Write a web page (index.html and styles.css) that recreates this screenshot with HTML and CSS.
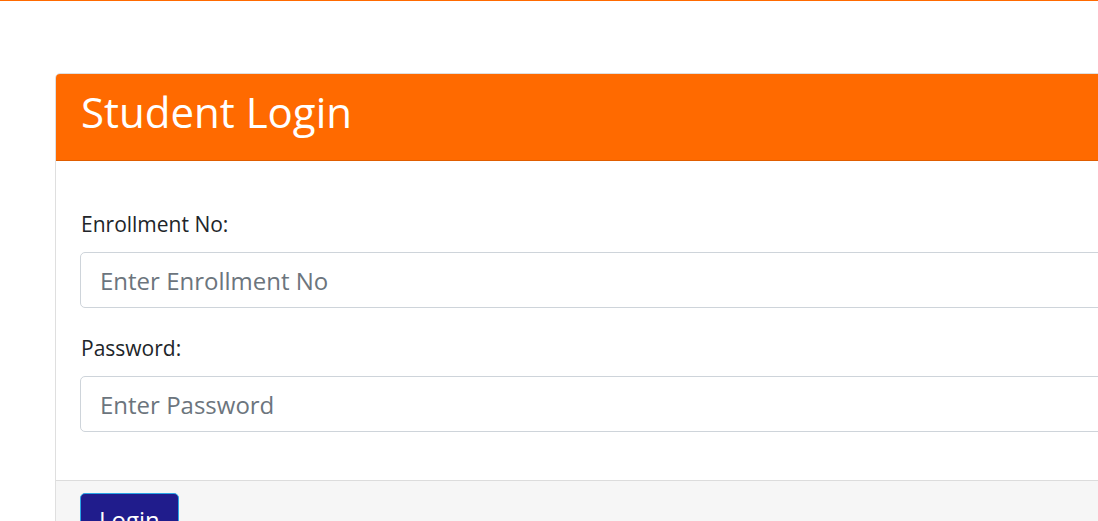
FILE: index.html
```html
<!DOCTYPE html>
<html lang="en">
<head>
<meta charset="utf-8">
<title>Student Login</title>
<link rel="stylesheet" href="styles.css">
</head>
<body>
<div class="page">
  <div class="card">
    <div class="card-header">
      <h2 class="card-title">Student Login</h2>
    </div>
    <div class="card-body">
      <form class="login-form">
        <div class="form-group">
          <label class="form-label" for="enroll">Enrollment No:</label>
          <input class="form-control" id="enroll" type="text" placeholder="Enter Enrollment No">
        </div>
        <div class="form-group">
          <label class="form-label" for="pwd">Password:</label>
          <input class="form-control" id="pwd" type="password" placeholder="Enter Password">
        </div>
      </form>
    </div>
    <div class="card-footer">
      <button class="btn-login" type="button">Login</button>
    </div>
  </div>
</div>
</body>
</html>
```

FILE: styles.css
```css
html, body {
  overflow: hidden;
}
body {
  margin: 0;
  border-top: 1px solid #ff6a00;
  font-family: "Open Sans", "Liberation Sans", sans-serif;
  color: #212529;
  background: #fff;
}
.page {
  padding: 72px 0 0 55px;
}
.card {
  width: 1100px;
  border: 1px solid #dfdfdf;
  border-radius: 5px;
  background: #fff;
}
.card-header {
  background: #ff6a00;
  border-bottom: 1px solid #e05d00;
  padding: 13px 25px 23px;
  border-radius: 4px 4px 0 0;
}
.card-title {
  margin: 0;
  font-size: 42px;
  line-height: 50px;
  font-weight: 400;
  color: #fff;
}
.card-body {
  padding: 48px 24px 23px;
}
.login-form {
  display: flex;
  flex-direction: column;
}
.form-group {
  display: flex;
  flex-direction: column;
  margin-bottom: 25px;
}
.form-label {
  font-size: 21px;
  line-height: 31px;
  margin-bottom: 12px;
  padding-left: 1px;
}
.form-control {
  box-sizing: border-box;
  height: 56px;
  border: 1px solid #ced4da;
  border-radius: 5px;
  padding: 0 19px;
  font-family: "Open Sans", "Liberation Sans", sans-serif;
  font-size: 24px;
  color: #495057;
  background: #fff;
}
.form-control::placeholder {
  color: #6c757d;
}
.card-footer {
  background: #f6f6f6;
  border-top: 1px solid #dcdcdc;
  padding: 12px 24px 20px;
}
.btn-login {
  font-family: "Open Sans", "Liberation Sans", sans-serif;
  font-size: 24px;
  line-height: 36px;
  padding: 8px 18px;
  color: #fff;
  background: #201c8c;
  border: 1px solid #2aa6e6;
  border-radius: 5px;
}
```
